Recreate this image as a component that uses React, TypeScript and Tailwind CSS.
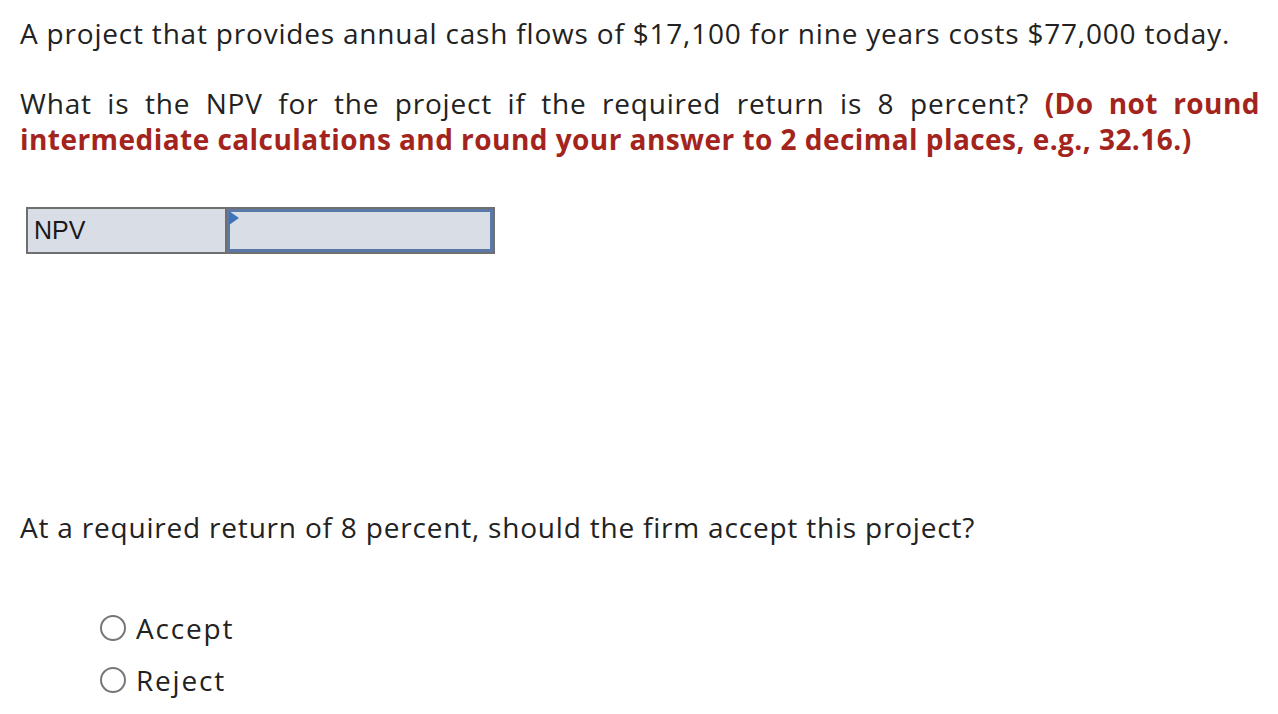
import React from "react";

export default function App() {
  return (
    <div className="w-[1278px] h-[714px] bg-white text-[#222] overflow-hidden" style={{ fontFamily: "'Open Sans', Lato, sans-serif" }}>
      <div className="pl-[20px] pr-[18px] pt-[15px]">
        <p className="text-[28px] leading-[36px] tracking-[0.8px]">A project that provides annual cash flows of $17,100 for nine years costs $77,000 today.</p>
        <p className="text-[28px] leading-[36px] mt-[34px] text-justify tracking-[0.8px]">
          What is the NPV for the project if the required return is 8 percent?{" "}
          <b className="text-[#a3241d] font-bold tracking-[0.45px]">(Do not round intermediate calculations and round your answer to 2 decimal places, e.g., 32.16.)</b>
        </p>
        <div className="mt-[50px] ml-[6px] flex w-[469px] h-[47px] border-2 border-[#6f6f6f] bg-[#d9dee6]">
          <div className="w-[199px] border-r-2 border-[#6f6f6f] flex items-center pl-[6px] text-[25px] text-[#1a1a1a]" style={{ fontFamily: "'Liberation Sans', Arial, sans-serif" }}>NPV</div>
          <div className="relative flex-1 border-[3px] border-[#5b79a8]">
            <svg className="absolute -left-[1px] -top-[1px]" width="10" height="14" viewBox="0 0 10 14"><polygon points="0,0 10,7 0,14" fill="#3f73b8" /></svg>
          </div>
        </div>
        <p className="text-[28px] leading-[36px] mt-[255px] tracking-[0.8px]">At a required return of 8 percent, should the firm accept this project?</p>
        <div className="ml-[80px] mt-[65px] flex flex-col gap-[16px]">
          <label className="flex items-center gap-[10px] text-[28px] leading-[36px] tracking-[1.8px]">
            <span className="w-[26px] h-[26px] rounded-full border-2 border-[#777] bg-white" />
            Accept
          </label>
          <label className="flex items-center gap-[10px] text-[28px] leading-[36px] tracking-[1.8px]">
            <span className="w-[26px] h-[26px] rounded-full border-2 border-[#777] bg-white" />
            Reject
          </label>
        </div>
      </div>
    </div>
  );
}
